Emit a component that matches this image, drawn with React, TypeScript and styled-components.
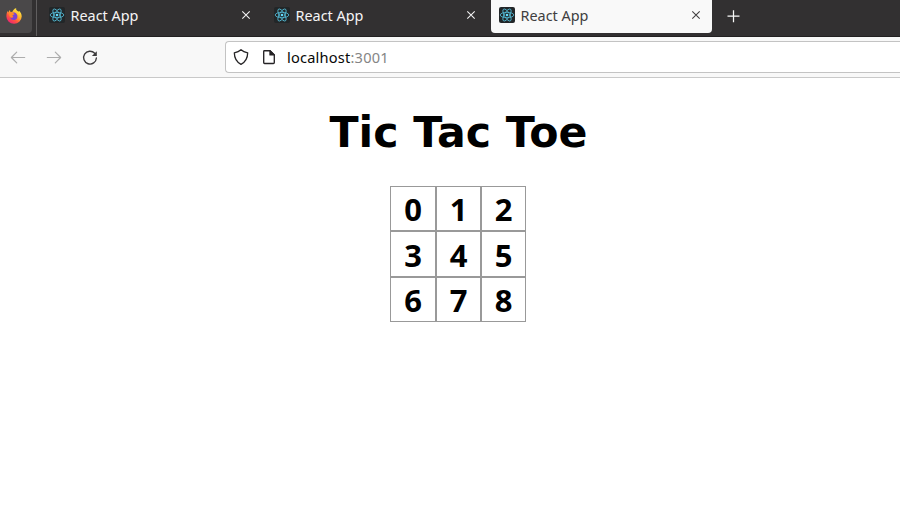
import React from "react";
import styled, { createGlobalStyle } from "styled-components";

const GlobalStyle = createGlobalStyle`
  * { box-sizing: border-box; }
  body { margin: 0; background: #fff; overflow: hidden; }
`;

const Browser = styled.div`
  width: 900px;
  height: 515px;
  overflow: hidden;
  background: #fff;
  font-family: "Noto Sans", "Open Sans", sans-serif;
`;

const TabStrip = styled.div`
  display: flex;
  align-items: flex-start;
  height: 37px;
  background: #323031;
  border-bottom: 1px solid #222021;
`;

const PinnedTab = styled.div`
  width: 32px;
  height: 33px;
  padding: 7px 0 0 6px;
  background: #4a4849;
  border-radius: 0 0 4px 0;
`;

const Separator = styled.div`
  width: 1px;
  height: 36px;
  margin: 0 4px 0 4px;
  background: #605e5f;
`;

const Tab = styled.div<{ $active?: boolean }>`
  display: flex;
  align-items: flex-start;
  width: 221px;
  height: 33px;
  margin-right: 4px;
  padding: 7px 10px 0 8px;
  border-radius: 0 0 4px 4px;
  color: ${(p) => (p.$active ? "#403e3f" : "#f5f4f5")};
  background: ${(p) => (p.$active ? "#f9f9f9" : "transparent")};
`;

const TabTitle = styled.span`
  flex: 1;
  margin: -1px 0 0 5.5px;
  font-size: 14.4px;
  line-height: 20px;
  letter-spacing: 0;
  white-space: nowrap;
`;

const CloseIcon = styled.svg`
  width: 12px;
  height: 12px;
  margin-top: 2px;
`;

const NewTab = styled.svg`
  width: 14px;
  height: 14px;
  margin: 9px 0 0 10px;
  color: #f9f9f9;
`;

const NavBar = styled.div`
  display: flex;
  height: 41px;
  padding-top: 4px;
  background: #f8f8f8;
  border-bottom: 1px solid #c9c9c9;
`;

const NavButtons = styled.div`
  display: flex;
  gap: 20px;
  width: 225px;
  padding: 9px 0 0 10px;
`;

const NavIcon = styled.svg<{ $dim?: boolean }>`
  width: 16px;
  height: 16px;
  color: ${(p) => (p.$dim ? "#adadad" : "#3c3a3c")};
`;

const AddressBar = styled.div`
  display: flex;
  align-items: flex-start;
  flex: 1;
  height: 32px;
  padding: 7px 0 0 7px;
  background: #fff;
  border: 1px solid #c3c3c3;
  border-right: 0;
  border-radius: 4px 0 0 4px;
  color: #252325;
`;

const UrlIcon = styled.svg`
  width: 16px;
  height: 16px;
  margin-right: 12px;
`;

const Url = styled.span`
  margin: -2px 0 0 -2px;
  font-size: 14.6px;
  line-height: 20px;
  letter-spacing: 0.2px;
  color: #080808;
`;

const Port = styled.span`
  color: #858585;
`;

const Page = styled.main`
  display: flex;
  flex-direction: column;
  align-items: center;
  width: 917px;
  padding-top: 29px;
`;

const Title = styled.h1`
  margin: 0 0 29px;
  font: bold 42.67px/50px "DejaVu Sans", sans-serif;
  color: #000;
`;

const Board = styled.div`
  display: grid;
  grid-template-columns: 46px 45px 45px;
  grid-template-rows: 45px 46px 45px;
  width: 136px;
  margin-right: 1px;
`;

const Square = styled.button`
  display: flex;
  align-items: flex-end;
  justify-content: center;
  margin: 0;
  padding: 0;
  border: 1px solid #999;
  background: #fff;
  color: #000;
  font: bold 31px/42px "Noto Sans", "Open Sans", sans-serif;
`;

const ReactLogo = () => (
  <svg width="16" height="16" viewBox="0 0 16 16" fill="none">
    <rect width="16" height="16" rx="2" fill="#222628" />
    <g stroke="#53b8d3" strokeWidth=".85">
      <ellipse cx="8" cy="8" rx="6.8" ry="2.7" />
      <ellipse cx="8" cy="8" rx="6.8" ry="2.7" transform="rotate(60 8 8)" />
      <ellipse cx="8" cy="8" rx="6.8" ry="2.7" transform="rotate(120 8 8)" />
    </g>
    <circle cx="8" cy="8" r="1.3" fill="#61dafb" />
  </svg>
);

const FirefoxLogo = () => (
  <svg width="16" height="16" viewBox="0 0 16 16">
    <defs>
      <linearGradient id="flame" x1=".85" y1=".1" x2=".25" y2=".95">
        <stop offset="0" stopColor="#fff044" />
        <stop offset=".4" stopColor="#ffac2d" />
        <stop offset=".68" stopColor="#ff563d" />
        <stop offset="1" stopColor="#ee2472" />
      </linearGradient>
    </defs>
    <path
      d="M1.6 3.1 2.3 4.5C2.7 3.5 3.4 2.4 4 2l.2 1.8 2 .2C7 2 8.5.3 10.2.2c-.4 1.5.5 2.1 1.4 2.7l1 .9.4-1c1.7 1.3 2.7 3.5 2.7 5.7A7.6 7.6 0 0 1 8 15.8 7.5 7.5 0 0 1 .4 8.4c0-2 .3-3.7 1.2-5.3Z"
      fill="url(#flame)"
    />
    <path d="M5.1 5.4c1.7-1.3 4-1.1 5.5.5 1.5 1.8 1 4.7-1.2 5.8-2 .9-4.6 0-5.3-2.2 1 .5 2.3.3 3.2-.5L5.2 8c-.6-.7-.7-1.7-.1-2.6Z" fill="#7942d5" />
    <path d="M4.2 4.1c.8-.3 1.7 0 2.5.6L8.5 6c-.3.8-1.6.7-2 1.4-.2.6.5 1.1 1.2 1.4-1.3 1-3 .9-4-.2-.9-1.3-.7-3.2.5-4.5Z" fill="#ff8b28" />
  </svg>
);

const Close = () => (
  <CloseIcon viewBox="0 0 12 12" fill="none" stroke="currentColor" strokeWidth="1.05">
    <path d="m2.3 2.3 7.4 7.4m0-7.4-7.4 7.4" />
  </CloseIcon>
);

const BrowserTab = ({ active }: { active?: boolean }) => (
  <Tab $active={active}>
    <ReactLogo />
    <TabTitle>React App</TabTitle>
    <Close />
  </Tab>
);

export default function App() {
  return (
    <>
      <GlobalStyle />
      <Browser>
        <TabStrip>
          <PinnedTab><FirefoxLogo /></PinnedTab>
          <Separator />
          <BrowserTab />
          <BrowserTab />
          <BrowserTab active />
          <NewTab viewBox="0 0 14 14" stroke="currentColor" strokeWidth="1.25">
            <path d="M7.5 1.2v12M1.5 7.2h12" />
          </NewTab>
        </TabStrip>
        <NavBar>
          <NavButtons>
            <NavIcon $dim viewBox="0 0 16 16" fill="none" stroke="currentColor" strokeWidth="1.2" strokeLinecap="round" strokeLinejoin="round">
              <path d="M14.7 7.5H1.5m5.2-5.3L1.4 7.5l5.3 5.3" />
            </NavIcon>
            <NavIcon $dim viewBox="0 0 16 16" fill="none" stroke="currentColor" strokeWidth="1.2" strokeLinecap="round" strokeLinejoin="round">
              <path d="M1.3 7.5h13.2M9.3 2.2l5.3 5.3-5.3 5.3" />
            </NavIcon>
            <NavIcon viewBox="0 0 16 16" fill="none" stroke="currentColor" strokeWidth="1.35" strokeLinecap="round">
              <path d="M12.7 3.3A6.4 6.4 0 1 0 14.4 8" />
              <path d="M14.8 1.2v4.9H9.9Z" fill="currentColor" stroke="none" />
            </NavIcon>
          </NavButtons>
          <AddressBar>
            <UrlIcon viewBox="0 0 16 16" fill="none" stroke="currentColor" strokeWidth="1.3" strokeLinejoin="round">
              <path d="M8 .8c2 1.8 4.1 2.5 6.7 3-.1 5-1.6 9.1-6.7 11.5C2.9 12.9 1.4 8.8 1.3 3.8 3.9 3.3 6 2.6 8 .8Z" />
            </UrlIcon>
            <UrlIcon viewBox="0 0 16 16" fill="none" stroke="currentColor" strokeWidth="1.35" strokeLinejoin="round">
              <path d="M3.4 1.7H9l4.3 4.2v7.7c0 .6-.3.9-.9.9H3.6c-.6 0-.9-.3-.9-.9V2.4c0-.4.3-.7.7-.7Z" />
              <path d="M9 1.7v4.2h4.3Z" fill="currentColor" />
            </UrlIcon>
            <Url>localhost<Port>:3001</Port></Url>
          </AddressBar>
        </NavBar>
        <Page>
          <Title>Tic Tac Toe</Title>
          <Board>
            {[0, 1, 2, 3, 4, 5, 6, 7, 8].map((n) => <Square key={n}>{n}</Square>)}
          </Board>
        </Page>
      </Browser>
    </>
  );
}
